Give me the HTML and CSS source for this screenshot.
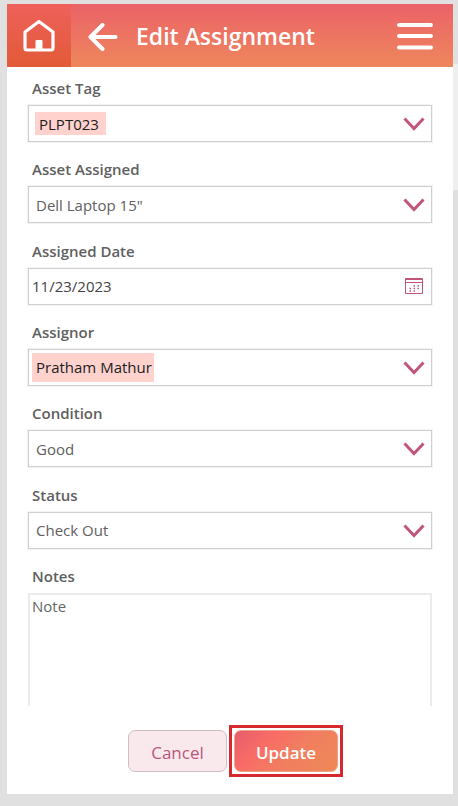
FILE: index.html
```html
<!DOCTYPE html>
<html lang="en">
<head>
    <meta charset="UTF-8">
    <meta name="viewport" content="width=device-width, initial-scale=1.0">
    <title>Edit Assignment</title>
    <link rel="stylesheet" href="styles.css">
</head>
<body>
    <div class="scroll-thumb"></div>
    <div class="app">
        <header class="app-header">
            <button class="home-button" type="button" aria-label="Home">
                <svg width="34" height="34" viewBox="0 0 34 34" fill="none" stroke="currentColor" stroke-width="3.2" stroke-linejoin="round">
                    <path d="M3 13 L17 2.5 L31 13 V29 Q31 31 29 31 H5 Q3 31 3 29 Z"></path>
                    <path d="M13.5 31 V22 Q13.5 21 14.5 21 H19.5 Q20.5 21 20.5 22 V31 Z" fill="currentColor" stroke="none"></path>
                </svg>
            </button>
            <button class="icon-button back-button" type="button" aria-label="Back">
                <svg width="30" height="28" viewBox="0 0 30 28" fill="none" stroke="currentColor" stroke-width="4" stroke-linecap="round" stroke-linejoin="round">
                    <path d="M14.5 2 L2.5 14 L14.5 26"></path>
                    <path d="M3 14 H27.5"></path>
                </svg>
            </button>
            <h1>Edit Assignment</h1>
            <button class="icon-button menu-button" type="button" aria-label="Menu">
                <svg width="36" height="28" viewBox="0 0 36 28" fill="none" stroke="currentColor" stroke-width="4" stroke-linecap="round">
                    <path d="M2 3 H34 M2 14 H34 M2 25.5 H34"></path>
                </svg>
            </button>
        </header>

        <form class="edit-form">
            <div class="form-fields">
                <div class="field">
                    <label for="assetTag">Asset Tag</label>
                    <div class="control">
                        <select id="assetTag" class="selected-tag">
                            <option>PLPT023</option>
                        </select>
                        <svg class="chevron" width="22" height="14" viewBox="0 0 22 14"><path d="M1.5 1.5 L11 11.5 L20.5 1.5"></path></svg>
                    </div>
                </div>
                <div class="field">
                    <label for="assetAssigned">Asset Assigned</label>
                    <div class="control">
                        <select id="assetAssigned">
                            <option>Dell Laptop 15"</option>
                        </select>
                        <svg class="chevron" width="22" height="14" viewBox="0 0 22 14"><path d="M1.5 1.5 L11 11.5 L20.5 1.5"></path></svg>
                    </div>
                </div>
                <div class="field">
                    <label for="assignedDate">Assigned Date</label>
                    <div class="control">
                        <input type="text" id="assignedDate" value="11/23/2023">
                        <button class="calendar-button" type="button" aria-label="Choose date">
                            <svg width="18" height="17" viewBox="0 0 18 17" fill="none" stroke="currentColor">
                                <path d="M0.5 0.5 H17.5 V15.5 H0.5 Z M0.5 1.5 H17.5 M0.5 4.5 H17.5"></path>
                                <path d="M8.5 8 H10 M12.5 8 H14 M8.5 10.5 H10 M12.5 10.5 H14 M4.5 10.5 H6 M4.5 13 H6 M8.5 13 H10" stroke-width="1.5"></path>
                            </svg>
                        </button>
                    </div>
                </div>
                <div class="field">
                    <label for="assignor">Assignor</label>
                    <div class="control">
                        <select id="assignor" class="selected-person">
                            <option>Pratham Mathur</option>
                        </select>
                        <svg class="chevron" width="22" height="14" viewBox="0 0 22 14"><path d="M1.5 1.5 L11 11.5 L20.5 1.5"></path></svg>
                    </div>
                </div>
                <div class="field">
                    <label for="condition">Condition</label>
                    <div class="control">
                        <select id="condition">
                            <option>Good</option>
                        </select>
                        <svg class="chevron" width="22" height="14" viewBox="0 0 22 14"><path d="M1.5 1.5 L11 11.5 L20.5 1.5"></path></svg>
                    </div>
                </div>
                <div class="field">
                    <label for="status">Status</label>
                    <div class="control">
                        <select id="status">
                            <option>Check Out</option>
                        </select>
                        <svg class="chevron" width="22" height="14" viewBox="0 0 22 14"><path d="M1.5 1.5 L11 11.5 L20.5 1.5"></path></svg>
                    </div>
                </div>
                <div class="field">
                    <label for="notes">Notes</label>
                    <textarea id="notes" placeholder="Note"></textarea>
                </div>
            </div>

            <div class="form-actions">
                <button class="cancel-btn" type="button">Cancel</button>
                <div class="update-frame">
                    <button class="update-btn" type="submit">Update</button>
                </div>
            </div>
        </form>
    </div>
</body>
</html>
```

FILE: styles.css
```css
* {
    margin: 0;
    padding: 0;
    box-sizing: border-box;
}

body {
    font-family: 'Open Sans', 'Noto Sans', sans-serif;
    background: #e0e0e0;
    min-height: 100vh;
    padding: 4px 5px 12px 7px;
    position: relative;
}

button,
input,
select,
textarea {
    font-family: inherit;
}

button {
    cursor: pointer;
}

.scroll-thumb {
    position: absolute;
    top: 64px;
    right: 0;
    width: 5px;
    height: 126px;
    background: #efefef;
}

.app {
    background: white;
    min-height: calc(100vh - 16px);
    display: flex;
    flex-direction: column;
}

/* Header */
.app-header {
    display: flex;
    align-items: center;
    height: 63px;
    padding-right: 20px;
    background: linear-gradient(180deg, #eb6268 0%, #ee875c 100%);
    color: white;
}

.app-header h1 {
    flex: 1;
    font-size: 23px;
    font-weight: 600;
    line-height: 32px;
}

.home-button {
    display: flex;
    align-items: center;
    justify-content: center;
    width: 64px;
    height: 100%;
    border: none;
    background: linear-gradient(180deg, #ee615a 0%, #e25a38 100%);
    color: white;
}

.icon-button {
    display: flex;
    border: none;
    background: none;
    color: white;
}

.back-button {
    margin: 3px 18px 0 17px;
}

/* Form */
.edit-form {
    flex: 1;
    display: flex;
    flex-direction: column;
}

.form-fields {
    flex: 1;
    display: flex;
    flex-direction: column;
    justify-content: space-between;
    padding: 11px 21px 0;
}

.field label {
    display: block;
    padding-left: 4px;
    margin-bottom: 7px;
    font-size: 15px;
    font-weight: 600;
    line-height: 20px;
    color: #606060;
}

.control {
    position: relative;
}

.control select,
.control input {
    display: block;
    width: 100%;
    height: 37px;
    border: 1px solid #cfcfcf;
    border-radius: 0;
    box-shadow: 0 0 0 1px #f3f3f3;
    background-color: white;
    background-repeat: no-repeat;
    font-size: 15px;
    color: #606060;
    outline: none;
}

.control select {
    appearance: none;
    padding: 0 40px 0 7px;
}

.control input {
    padding: 0 40px 0 3px;
    color: #444;
}

/* Highlight behind the chosen value */
.control .selected-tag {
    padding-left: 10px;
    color: #1c1c1c;
    background-image: linear-gradient(#ffd2ce, #ffd2ce);
    background-position: 6px 6px;
    background-size: 71px 23px;
}

.control .selected-person {
    color: #1c1c1c;
    background-image: linear-gradient(#ffd2ce, #ffd2ce);
    background-position: 3px 3px;
    background-size: 122px 29px;
}

.chevron {
    position: absolute;
    top: 12px;
    right: 7px;
    fill: none;
    stroke: #c2557a;
    stroke-width: 3;
    pointer-events: none;
}

.calendar-button {
    position: absolute;
    top: 10px;
    right: 9px;
    display: flex;
    border: none;
    background: none;
    color: #c2557a;
}

.field textarea {
    display: block;
    width: 100%;
    height: 113px;
    padding: 1px 2px;
    border: 2px solid #ebebeb;
    border-bottom: none;
    font-size: 15px;
    line-height: 20px;
    resize: none;
    outline: none;
}

.field textarea::placeholder {
    color: #666;
}

/* Buttons */
.form-actions {
    display: flex;
    align-items: center;
    justify-content: center;
    gap: 2px;
    padding: 19px 0 17px 11px;
}

.cancel-btn,
.update-btn {
    height: 42px;
    padding-top: 2px;
    border-radius: 7px;
    font-size: 17px;
}

.cancel-btn {
    width: 99px;
    border: 1px solid #cdbfc4;
    background: #f9e9ed;
    color: #b9567a;
}

.update-frame {
    padding: 2px;
    border: 3px solid #d7282f;
}

.update-btn {
    display: block;
    width: 104px;
    border: 1px solid #f3a184;
    background: linear-gradient(135deg, #e35d6c 0%, #f96c66 30%, #f17d60 55%, #ee8a57 100%);
    color: white;
    font-weight: 600;
}
```
